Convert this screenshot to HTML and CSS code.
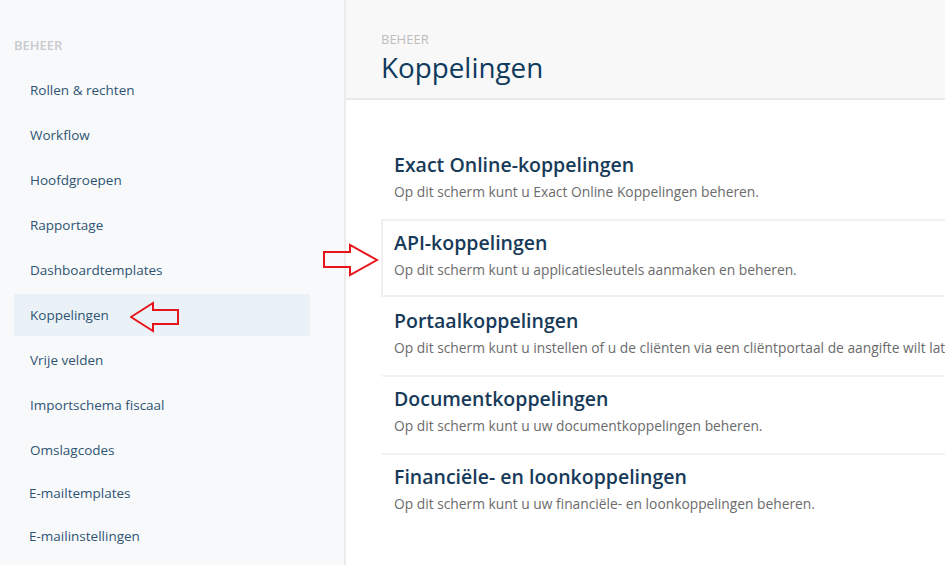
FILE: index.html
```html
<!DOCTYPE html>
<html lang="nl">
<head>
    <meta charset="UTF-8">
    <meta name="viewport" content="width=device-width, initial-scale=1.0">
    <title>Koppelingen</title>
    <link rel="stylesheet" href="styles.css">
</head>
<body>
    <div class="app">
        <!-- Sidebar -->
        <aside class="sidebar">
            <div class="sidebar-label">Beheer</div>
            <nav class="nav">
                <a class="nav-item" href="#">Rollen &amp; rechten</a>
                <a class="nav-item" href="#">Workflow</a>
                <a class="nav-item" href="#">Hoofdgroepen</a>
                <a class="nav-item" href="#">Rapportage</a>
                <a class="nav-item" href="#">Dashboardtemplates</a>
                <a class="nav-item active" href="#">Koppelingen</a>
                <a class="nav-item" href="#">Vrije velden</a>
                <a class="nav-item" href="#">Importschema fiscaal</a>
                <a class="nav-item" href="#">Omslagcodes</a>
                <a class="nav-item tight" href="#">E-mailtemplates</a>
                <a class="nav-item tight" href="#">E-mailinstellingen</a>
            </nav>
            <svg class="arrow arrow-left" viewBox="0 0 50 32" fill="none" stroke="#e8141c" stroke-width="2">
                <path d="M1 16 L23 2 L23 9 L48 9 L48 23 L23 23 L23 30 Z"/>
            </svg>
        </aside>

        <!-- Main -->
        <main class="main">
            <header class="page-header">
                <div class="crumb">Beheer</div>
                <h1>Koppelingen</h1>
            </header>

            <div class="content">
                <svg class="arrow arrow-right" viewBox="0 0 56 34" fill="none" stroke="#e8141c" stroke-width="2">
                    <path d="M1 9 L27 9 L27 2 L54 17 L27 32 L27 24 L1 24 Z"/>
                </svg>
                <div class="card-list">
                    <div class="card">
                        <h2>Exact Online-koppelingen</h2>
                        <p>Op dit scherm kunt u Exact Online Koppelingen beheren.</p>
                    </div>
                    <div class="card selected">
                        <h2>API-koppelingen</h2>
                        <p>Op dit scherm kunt u applicatiesleutels aanmaken en beheren.</p>
                    </div>
                    <div class="card">
                        <h2>Portaalkoppelingen</h2>
                        <p>Op dit scherm kunt u instellen of u de cliënten via een cliëntportaal de aangifte wilt laten goedkeuren.</p>
                    </div>
                    <div class="card sep">
                        <h2>Documentkoppelingen</h2>
                        <p>Op dit scherm kunt u uw documentkoppelingen beheren.</p>
                    </div>
                    <div class="card sep">
                        <h2>Financiële- en loonkoppelingen</h2>
                        <p>Op dit scherm kunt u uw financiële- en loonkoppelingen beheren.</p>
                    </div>
                </div>
            </div>
        </main>
    </div>
</body>
</html>
```

FILE: styles.css
```css
* {
    margin: 0;
    padding: 0;
    box-sizing: border-box;
}

body {
    font-family: "Open Sans", "Lato", Arial, sans-serif;
    background-color: #ffffff;
    overflow: hidden;
}

.app {
    display: flex;
    width: 1300px;
    min-height: 565px;
}

/* Sidebar */
.sidebar {
    position: relative;
    width: 346px;
    flex-shrink: 0;
    background-color: #f8f9fb;
    border-right: 2px solid #ebebeb;
    padding-top: 37px;
}

.sidebar-label {
    padding-left: 14px;
    font-size: 13px;
    line-height: 16px;
    font-weight: 600;
    text-transform: uppercase;
    color: #c9cacd;
}

.nav {
    display: flex;
    flex-direction: column;
    gap: 3px;
    margin-top: 16px;
}

.nav-item {
    display: block;
    width: 296px;
    height: 42px;
    margin-left: 14px;
    padding-left: 16px;
    line-height: 42px;
    font-size: 13.5px;
    color: #2f5473;
    text-decoration: none;
}

.nav-item.tight {
    margin-top: -2px;
    padding-left: 15px;
}

.nav-item.active {
    background-color: #eaf2f8;
}

/* Arrows */
.arrow {
    position: absolute;
}

.arrow-left {
    left: 130px;
    top: 301px;
    width: 50px;
    height: 32px;
}

.arrow-right {
    left: -23px;
    top: 143px;
    width: 56px;
    height: 34px;
}

/* Main */
.main {
    flex: 1;
}

.page-header {
    height: 100px;
    background-color: #f8f8f8;
    border-bottom: 2px solid #e8e8e8;
    padding: 31px 0 0 35px;
}

.crumb {
    font-size: 13px;
    line-height: 16px;
    text-transform: uppercase;
    color: #bdbdbd;
}

.page-header h1 {
    margin-top: 4px;
    font-size: 27.8px;
    line-height: 32px;
    font-weight: 400;
    color: #0d3a5d;
}

.content {
    position: relative;
    padding: 41px 0 0 35px;
}

.card {
    height: 78px;
    padding: 10px 11px 0;
    border: 2px solid transparent;
}

.card.selected {
    border-color: #f0f0f0;
}

.card.sep {
    border-top-color: #f2f2f2;
}

.card h2 {
    font-size: 19.5px;
    line-height: 24px;
    font-weight: 600;
    color: #173a59;
}

.card p {
    margin-top: 6px;
    font-size: 13.8px;
    line-height: 18px;
    color: #6b6b6b;
    white-space: nowrap;
}
```
